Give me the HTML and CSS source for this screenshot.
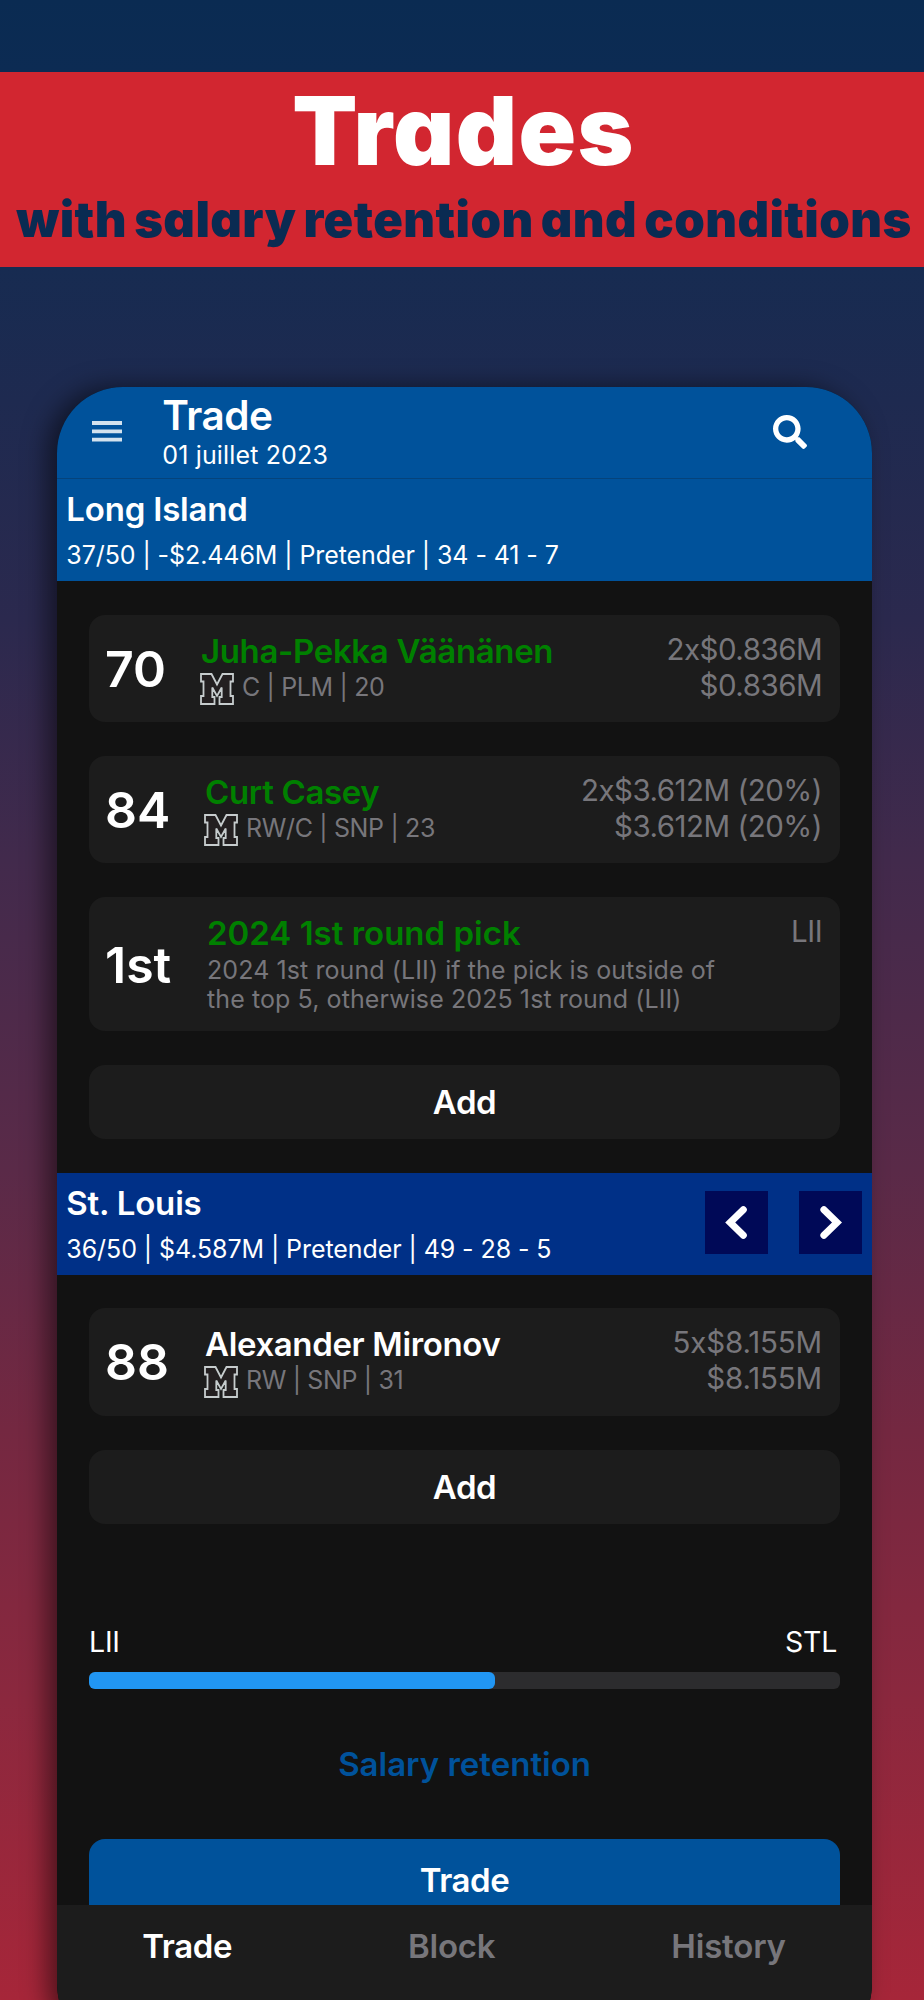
FILE: index.html
```html
<!DOCTYPE html>
<html lang="en">
<head>
    <meta charset="UTF-8">
    <meta name="viewport" content="width=device-width, initial-scale=1.0">
    <title>Trades</title>
    <link rel="stylesheet" href="styles.css">
</head>
<body>

    <!-- Shared icons -->
    <svg class="sprite" width="0" height="0">
        <symbol id="logo" viewBox="0 0 34 32">
            <path d="M1 1H11.5L17 11.5L22.5 1H33V8.5H30.5V23H33V31H19.5V24H21.7V14.5L17 23L12.3 14.5V24H14.5V31H1V23H3.5V8.5H1Z" fill="#231f20" stroke="#c6cccd" stroke-width="1.8"/>
        </symbol>
    </svg>

    <div class="banner">
        <h1>Trades</h1>
        <h2>with salary retention and conditions</h2>
    </div>

    <div class="phone">
        <header class="topbar">
            <svg class="menu" width="30" height="22" viewBox="0 0 30 22">
                <path d="M0 2H30M0 10.3H30M0 18.6H30" stroke="#d3e2ee" stroke-width="3.8"/>
            </svg>
            <div class="heading">
                <div class="title">Trade</div>
                <div class="date">01 juillet 2023</div>
            </div>
            <svg class="search" width="34" height="34" viewBox="0 0 512 512">
                <path fill="#fff" d="M505 442.7L405.3 343c-4.5-4.5-10.6-7-17-7H372c27.6-35.3 44-79.7 44-128C416 93.1 322.9 0 208 0S0 93.1 0 208s93.1 208 208 208c48.3 0 92.7-16.4 128-44v16.3c0 6.4 2.5 12.5 7 17l99.7 99.7c9.4 9.4 24.6 9.4 33.9 0l28.3-28.3c9.4-9.4 9.4-24.6.1-34zM208 336c-70.7 0-128-57.2-128-128 0-70.7 57.2-128 128-128 70.7 0 128 57.2 128 128 0 70.7-57.2 128-128 128z"/>
            </svg>
        </header>

        <section class="team long-island">
            <div>
                <div class="team-name">Long Island</div>
                <div class="team-info">37/50 | -$2.446M | Pretender | 34 - 41 - 7</div>
            </div>
        </section>

        <div class="cards">
            <div class="card">
                <div class="number seventy">70</div>
                <div class="details">
                    <div class="name traded juha">Juha-Pekka Väänänen</div>
                    <div class="info"><svg class="logo"><use href="#logo"/></svg>C | PLM | 20</div>
                </div>
                <div class="salary">2x$0.836M<br>$0.836M</div>
            </div>
            <div class="card">
                <div class="number">84</div>
                <div class="details">
                    <div class="name traded">Curt Casey</div>
                    <div class="info"><svg class="logo"><use href="#logo"/></svg>RW/C | SNP | 23</div>
                </div>
                <div class="salary">2x$3.612M (20%)<br>$3.612M (20%)</div>
            </div>
            <div class="card pick">
                <div class="number">1st</div>
                <div class="details">
                    <div class="name traded">2024 1st round pick</div>
                    <div class="desc">2024 1st round (LII) if the pick is outside of<br>the top 5, otherwise 2025 1st round (LII)</div>
                </div>
                <div class="salary">LII</div>
            </div>
            <div class="card add">Add</div>
        </div>

        <section class="team st-louis">
            <div>
                <div class="team-name">St. Louis</div>
                <div class="team-info">36/50 | $4.587M | Pretender | 49 - 28 - 5</div>
            </div>
            <div class="arrows">
                <div class="arrow">
                    <svg width="63" height="63" viewBox="0 0 63 63"><path d="M38.3 18.7L25.2 31.5L38.3 44.3"/></svg>
                </div>
                <div class="arrow">
                    <svg width="63" height="63" viewBox="0 0 63 63"><path d="M24.9 18.7L38 31.5L24.9 44.3"/></svg>
                </div>
            </div>
        </section>

        <div class="cards">
            <div class="card">
                <div class="number">88</div>
                <div class="details">
                    <div class="name">Alexander Mironov</div>
                    <div class="info"><svg class="logo"><use href="#logo"/></svg>RW | SNP | 31</div>
                </div>
                <div class="salary long-term">5x$8.155M<br>$8.155M</div>
            </div>
            <div class="card add">Add</div>
        </div>

        <div class="balance">
            <div class="labels"><span>LII</span><span>STL</span></div>
            <div class="bar"><div class="fill" style="width: 54%"></div></div>
        </div>

        <div class="retention">Salary retention</div>
        <div class="submit">Trade</div>

        <nav class="tabs">
            <div class="tab active">Trade</div>
            <div class="tab">Block</div>
            <div class="tab">History</div>
        </nav>
    </div>

</body>
</html>
```

FILE: styles.css
```css
* {
    box-sizing: border-box;
}
body {
    margin: 0;
    width: 924px;
    height: 2000px;
    overflow: hidden;
    background: linear-gradient(#0a2b52 0, #0c2b53 70px, #172b51 267px, #1e2a50 400px, #2b294e 620px, #422a4c 860px, #5a2a48 1170px, #742841 1430px, #8b283e 1700px, #a62639 2000px);
    font-family: Inter, "Liberation Sans", sans-serif;
    color: #fff;
}
.sprite {
    position: absolute;
}

/* Banner */
.banner {
    margin-top: 71.5px;
    height: 195.5px;
    background-color: #d22630;
    text-align: center;
    white-space: nowrap;
    font-feature-settings: "cv11";
}
h1 {
    margin: 0;
    padding: 4px 0 0 3px;
    font-size: 95px;
    font-weight: 900;
    line-height: 110px;
    letter-spacing: 1.4px;
}
h2 {
    margin: 0;
    padding: 0 0 0 4px;
    font-size: 49px;
    font-weight: 900;
    line-height: 68px;
    letter-spacing: .4px;
    word-spacing: -3px;
    color: #0a2b52;
}

/* Phone */
.phone {
    width: 814.5px;
    height: 1663px;
    margin: 120px 0 0 57.3px;
    border-radius: 66px;
    background-color: #121212;
    box-shadow: -10px 0 24px rgba(0, 0, 0, .5);
    overflow: hidden;
}
.topbar {
    display: flex;
    height: 92px;
    padding-left: 35px;
    background-color: #00529b;
    border-bottom: 1px solid #05437b;
}
.menu {
    margin-top: 34px;
}
.heading {
    flex: 1;
    padding: 5px 0 0 40px;
}
.title {
    font-size: 40.5px;
    font-weight: 600;
    line-height: 48px;
    letter-spacing: -.5px;
}
.date {
    font-size: 25px;
    line-height: 31px;
    letter-spacing: .15px;
}
.search {
    margin: 28px 65px 0 0;
}
.team {
    display: flex;
    justify-content: space-between;
    height: 102px;
    padding: 10px 10px 0 9px;
}
.long-island {
    background-color: #00529b;
}
.st-louis {
    background-color: #003087;
}
.team-name {
    font-size: 33px;
    font-weight: 600;
    line-height: 41px;
    letter-spacing: -.2px;
}
.team-info {
    padding-top: 9px;
    font-size: 25px;
    line-height: 32px;
    letter-spacing: -.08px;
}
.arrows {
    display: flex;
    gap: 31px;
    margin-top: 8.5px;
}
.arrow {
    width: 63px;
    height: 63px;
    background-color: #000957;
}
.arrow path {
    fill: none;
    stroke: #fff;
    stroke-width: 7;
    stroke-linecap: round;
}

/* Cards */
.cards {
    display: flex;
    flex-direction: column;
    gap: 33.75px;
    padding: 33.5px 31.7px 34px;
}
.card {
    display: flex;
    height: 107.5px;
    padding: 16px 18px 0 16px;
    border-radius: 16px;
    background-color: #1c1c1c;
}
.number {
    width: 100px;
    margin-top: -16px;
    font-size: 50px;
    font-weight: 600;
    line-height: 108px;
}
.seventy {
    width: 96px;
}
.pick {
    height: 134px;
}
.pick .number {
    width: 102px;
    line-height: 136px;
}
.details {
    flex: 1;
    white-space: nowrap;
}
.name {
    font-size: 33px;
    font-weight: 600;
    line-height: 41px;
    letter-spacing: -.35px;
}
.pick .name {
    letter-spacing: 0;
}
.traded {
    color: #008000;
}
.info, .desc {
    display: flex;
    padding-top: 1px;
    font-size: 25px;
    line-height: 29px;
    letter-spacing: -.35px;
    color: #77767b;
}
.desc {
    display: block;
    padding-top: 2px;
    letter-spacing: .09px;
}
.logo {
    width: 34px;
    height: 32px;
    margin: 0 8px 0 -1px;
}
.salary {
    font-size: 29.5px;
    line-height: 36px;
    letter-spacing: -.5px;
    text-align: right;
    color: #77767b;
}
.long-term {
    letter-spacing: -.15px;
}
.add {
    justify-content: center;
    height: 74px;
    padding: 0;
    font-size: 33px;
    font-weight: 600;
    line-height: 74px;
    letter-spacing: -.4px;
}

/* Trade balance */
.balance {
    padding: 67.5px 31.7px 0;
}
.labels {
    display: flex;
    justify-content: space-between;
    padding-right: 3px;
    font-size: 28.5px;
    line-height: 34px;
    letter-spacing: -.2px;
}
.bar {
    height: 17px;
    margin-top: 13px;
    border-radius: 6px;
    background-color: #2c2c2e;
}
.fill {
    height: 17px;
    border-radius: 6px;
    background-color: #2196f3;
}
.retention {
    margin-top: 54px;
    font-size: 33px;
    font-weight: 600;
    line-height: 42px;
    text-align: center;
    color: #00529b;
}
.submit {
    height: 66px;
    margin: 54px 31.7px 0;
    border-radius: 16px 16px 0 0;
    background-color: #00529b;
    font-size: 33px;
    font-weight: 600;
    line-height: 83px;
    letter-spacing: -.4px;
    text-align: center;
}
.tabs {
    display: flex;
    justify-content: space-between;
    height: 160px;
    padding: 0 86px 0 85px;
    background-color: #1c1c1c;
    font-size: 33px;
    font-weight: 600;
    line-height: 82px;
    letter-spacing: -.2px;
    color: #77767b;
}
.active {
    color: #fff;
    letter-spacing: -.4px;
}
```
